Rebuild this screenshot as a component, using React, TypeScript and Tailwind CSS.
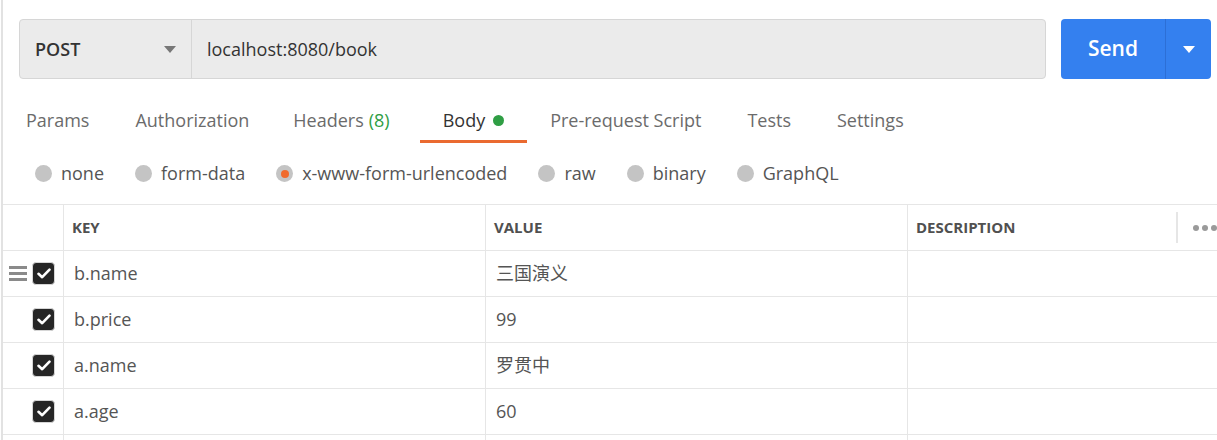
import { useState } from "react";

type Row = { key: string; value: string; checked: boolean };

const TABS = [
  "Params",
  "Authorization",
  "Headers",
  "Body",
  "Pre-request Script",
  "Tests",
  "Settings",
];

const BODY_TYPES = ["none", "form-data", "x-www-form-urlencoded", "raw", "binary", "GraphQL"];

const ROWS: Row[] = [
  { key: "b.name", value: "三国演义", checked: true },
  { key: "b.price", value: "99", checked: true },
  { key: "a.name", value: "罗贯中", checked: true },
  { key: "a.age", value: "60", checked: true },
];

function Caret({ className }: { className: string }) {
  return (
    <svg width="12" height="7" viewBox="0 0 12 7" className={className}>
      <path d="M0 0h12L6 7z" fill="currentColor" />
    </svg>
  );
}

function Check() {
  return (
    <div className="h-[23px] w-[23px] rounded-[4px] border border-[#d6d6d6] bg-[#262626] grid place-items-center">
      <svg width="14" height="11" viewBox="0 0 14 11">
        <path
          d="M1.5 5.8l3.7 3.4L12.5 1.6"
          fill="none"
          stroke="#fff"
          strokeWidth="2.6"
          strokeLinecap="round"
          strokeLinejoin="round"
        />
      </svg>
    </div>
  );
}

export default function App() {
  const [activeTab, setActiveTab] = useState("Body");
  const [bodyType, setBodyType] = useState("x-www-form-urlencoded");

  return (
    <div className="h-[440px] w-[1217px] overflow-hidden bg-white font-['Open_Sans','Noto_Sans_CJK_SC',sans-serif]">
      <div className="ml-[1px] h-full border-l-2 border-[#e2e2e2]">
        {/* url bar */}
        <div className="flex gap-[15px] pl-[16px] pr-[6px] pt-[19px]">
          <div className="flex h-[60px] flex-1 rounded-[4px] border border-[#d6d6d6] bg-[#ebebeb]">
            <div className="flex w-[172px] items-center justify-between border-r border-[#d6d6d6] pl-[15px] pr-[15px]">
              <span className="text-[18px] font-semibold text-[#333]">POST</span>
              <Caret className="text-[#777]" />
            </div>
            <div className="flex items-center pl-[15px] text-[18px] text-[#333]">
              localhost:8080/book
            </div>
          </div>
          <div className="flex h-[60px] w-[150px] overflow-hidden rounded-[4px] bg-[#3480ef] text-white">
            <button className="flex flex-1 items-center justify-center text-[21px] font-semibold">
              Send
            </button>
            <div className="flex w-[46px] items-center justify-center border-l border-[#2c6fd6]">
              <Caret className="text-white" />
            </div>
          </div>
        </div>

        {/* tabs */}
        <div className="flex">
          {TABS.map((t) => (
            <button
              key={t}
              onClick={() => setActiveTab(t)}
              className={`flex items-center border-b-[3px] pb-[8px] pt-[29px] text-[18px] leading-[24px] ${
                t === "Headers" ? "pl-[21px] pr-[30px]" : "px-[23px]"
              } ${activeTab === t ? "border-[#ea6a30] text-[#333]" : "border-transparent text-[#6b6b6b]"}`}
            >
              {t}
              {t === "Headers" && <span className="ml-[5px] text-[#2f9e44]">(8)</span>}
              {t === "Body" && <span className="ml-[8px] h-[11px] w-[11px] rounded-full bg-[#2f9e44]" />}
            </button>
          ))}
        </div>

        {/* body types */}
        <div className="flex h-[61px] items-center gap-[31px] pl-[32px]">
          {BODY_TYPES.map((b) => (
            <button
              key={b}
              onClick={() => setBodyType(b)}
              className="flex items-center gap-[9px] text-[18px] text-[#555]"
            >
              <span className="grid h-[17px] w-[17px] place-items-center rounded-full bg-[#c4c4c4]">
                {bodyType === b && <span className="h-[8px] w-[8px] rounded-full bg-[#f06a2c]" />}
              </span>
              {b}
            </button>
          ))}
        </div>

        {/* table */}
        <div className="border-t border-[#e6e6e6]">
          <div className="flex h-[46px] border-b border-[#e6e6e6] text-[15px] font-bold text-[#505050]">
            <div className="w-[61px] border-r border-[#e6e6e6]" />
            <div className="flex w-[422px] items-center border-r border-[#e6e6e6] pl-[8px]">KEY</div>
            <div className="flex w-[422px] items-center border-r border-[#e6e6e6] pl-[8px]">VALUE</div>
            <div className="flex flex-1 items-center pl-[8px]">
              <span className="flex-1">DESCRIPTION</span>
              <div className="h-[31px] w-[2px] bg-[#e6e6e6]" />
              <div className="flex w-[39px] shrink-0 gap-[3px] pl-[15px]">
                <span className="h-[6px] w-[6px] shrink-0 rounded-full bg-[#9a9a9a]" />
                <span className="h-[6px] w-[6px] shrink-0 rounded-full bg-[#9a9a9a]" />
                <span className="h-[6px] w-[6px] shrink-0 rounded-full bg-[#9a9a9a]" />
              </div>
            </div>
          </div>
          {ROWS.map((r, i) => (
            <div key={r.key} className="flex h-[46px] border-b border-[#e6e6e6] text-[18px] text-[#555]">
              <div className="flex w-[61px] items-center justify-end gap-[5px] border-r border-[#e6e6e6] pr-[8px]">
                {i === 0 && (
                  <div className="flex flex-col gap-[3px]">
                    <span className="h-[3px] w-[18px] bg-[#8a8a8a]" />
                    <span className="h-[3px] w-[18px] bg-[#8a8a8a]" />
                    <span className="h-[3px] w-[18px] bg-[#8a8a8a]" />
                  </div>
                )}
                {r.checked && <Check />}
              </div>
              <div className="flex w-[422px] items-center border-r border-[#e6e6e6] pl-[10px]">{r.key}</div>
              <div className="flex w-[422px] items-center border-r border-[#e6e6e6] pl-[10px]">{r.value}</div>
              <div className="flex-1" />
            </div>
          ))}
          <div className="flex h-[46px]">
            <div className="w-[61px] border-r border-[#e6e6e6]" />
            <div className="w-[422px] border-r border-[#e6e6e6]" />
            <div className="w-[422px] border-r border-[#e6e6e6]" />
          </div>
        </div>
      </div>
    </div>
  );
}
